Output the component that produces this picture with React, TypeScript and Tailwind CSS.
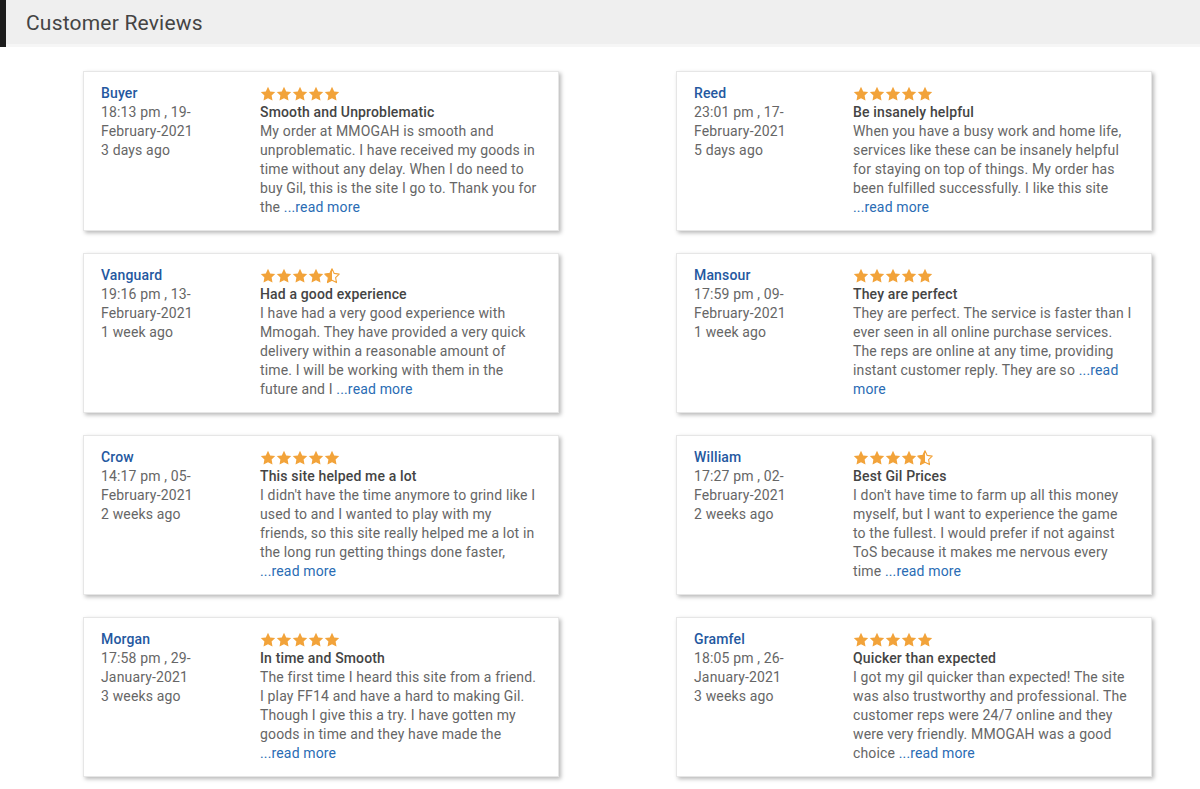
const reviews = [
  {
    name: "Buyer",
    time: "18:13 pm , 19-",
    date: "February-2021",
    ago: "3 days ago",
    stars: 5,
    title: "Smooth and Unproblematic",
    lines: [
      "My order at MMOGAH is smooth and",
      "unproblematic. I have received my goods in",
      "time without any delay. When I do need to",
      "buy Gil, this is the site I go to. Thank you for",
      "the ...read more",
    ],
  },
  {
    name: "Reed",
    time: "23:01 pm , 17-",
    date: "February-2021",
    ago: "5 days ago",
    stars: 5,
    title: "Be insanely helpful",
    lines: [
      "When you have a busy work and home life,",
      "services like these can be insanely helpful",
      "for staying on top of things. My order has",
      "been fulfilled successfully. I like this site",
      "...read more",
    ],
  },
  {
    name: "Vanguard",
    time: "19:16 pm , 13-",
    date: "February-2021",
    ago: "1 week ago",
    stars: 4.5,
    title: "Had a good experience",
    lines: [
      "I have had a very good experience with",
      "Mmogah. They have provided a very quick",
      "delivery within a reasonable amount of",
      "time. I will be working with them in the",
      "future and I ...read more",
    ],
  },
  {
    name: "Mansour",
    time: "17:59 pm , 09-",
    date: "February-2021",
    ago: "1 week ago",
    stars: 5,
    title: "They are perfect",
    lines: [
      "They are perfect. The service is faster than I",
      "ever seen in all online purchase services.",
      "The reps are online at any time, providing",
      "instant customer reply. They are so ...read",
      "more",
    ],
  },
  {
    name: "Crow",
    time: "14:17 pm , 05-",
    date: "February-2021",
    ago: "2 weeks ago",
    stars: 5,
    title: "This site helped me a lot",
    lines: [
      "I didn't have the time anymore to grind like I",
      "used to and I wanted to play with my",
      "friends, so this site really helped me a lot in",
      "the long run getting things done faster,",
      "...read more",
    ],
  },
  {
    name: "William",
    time: "17:27 pm , 02-",
    date: "February-2021",
    ago: "2 weeks ago",
    stars: 4.5,
    title: "Best Gil Prices",
    lines: [
      "I don't have time to farm up all this money",
      "myself, but I want to experience the game",
      "to the fullest. I would prefer if not against",
      "ToS because it makes me nervous every",
      "time ...read more",
    ],
  },
  {
    name: "Morgan",
    time: "17:58 pm , 29-",
    date: "January-2021",
    ago: "3 weeks ago",
    stars: 5,
    title: "In time and Smooth",
    lines: [
      "The first time I heard this site from a friend.",
      "I play FF14 and have a hard to making Gil.",
      "Though I give this a try. I have gotten my",
      "goods in time and they have made the",
      "...read more",
    ],
  },
  {
    name: "Gramfel",
    time: "18:05 pm , 26-",
    date: "January-2021",
    ago: "3 weeks ago",
    stars: 5,
    title: "Quicker than expected",
    lines: [
      "I got my gil quicker than expected! The site",
      "was also trustworthy and professional. The",
      "customer reps were 24/7 online and they",
      "were very friendly. MMOGAH was a good",
      "choice ...read more",
    ],
  },
];

const STAR = "M8 0.8l2.2 4.6 5 .7-3.6 3.5.9 5-4.5-2.4-4.5 2.4.9-5L.8 6.1l5-.7z";

const Star = ({ kind }: { kind: "full" | "half" }) => (
  <svg width="16" height="16" viewBox="0 0 16 16">
    {kind === "full" ? (
      <path d={STAR} fill="#f2a33a" />
    ) : (
      <>
        <defs>
          <clipPath id="halfclip">
            <rect x="0" y="0" width="8" height="16" />
          </clipPath>
        </defs>
        <path d={STAR} fill="none" stroke="#f2a33a" strokeWidth="1.1" strokeLinejoin="round" />
        <path d={STAR} fill="#f2a33a" clipPath="url(#halfclip)" />
      </>
    )}
  </svg>
);

const Stars = ({ n }: { n: number }) => (
  <div className="flex h-[19px] items-center">
    {[0, 1, 2, 3, 4].map((i) => (
      <Star key={i} kind={i < Math.floor(n) ? "full" : "half"} />
    ))}
  </div>
);

// the "...read more" link can break over two lines
const Line = ({ text }: { text: string }) => {
  if (text === "more") return <div className="text-[#2a6cb4]">more</div>;
  const i = text.indexOf("...read");
  if (i < 0) return <div className="whitespace-nowrap">{text}</div>;
  return (
    <div className="whitespace-nowrap">
      {text.slice(0, i)}
      <a className="text-[#2a6cb4]">{text.slice(i)}</a>
    </div>
  );
};

export default function App() {
  return (
    <div className="min-h-screen bg-white font-['Roboto',sans-serif] text-[14px] leading-[19px] tracking-[0.15px]">
      <div className="flex h-[47px] items-stretch bg-[#f6f6f6]">
        <div className="w-[6px] bg-[#1c1c1c]" />
        <div className="flex h-[44px] flex-1 items-center bg-[#efefef] pl-[20px] pt-[3px]">
          <h2 className="text-[21px] tracking-[0.2px] text-[#444]">Customer Reviews</h2>
        </div>
      </div>
      <div className="grid grid-cols-[476px_476px] gap-x-[117px] gap-y-[22px] pl-[83px] pt-[24px]">
        {reviews.map((r) => (
          <div
            key={r.name}
            className="flex border border-[#e6e6e6] bg-white pt-[12px] pb-[13px] pl-[17px] shadow-[2px_2px_4px_rgba(0,0,0,0.28)]"
          >
            <div className="w-[159px] shrink-0">
              <div className="font-medium text-[#2458a0]">{r.name}</div>
              <div className="text-[#666]">{r.time}</div>
              <div className="text-[#666]">{r.date}</div>
              <div className="text-[#666]">{r.ago}</div>
            </div>
            <div className="w-[290px]">
              <Stars n={r.stars} />
              <div className="font-medium text-[#444]">{r.title}</div>
              <div className="text-[#666]">
                {r.lines.map((l, k) => (
                  <Line key={k} text={l} />
                ))}
              </div>
            </div>
          </div>
        ))}
      </div>
    </div>
  );
}
